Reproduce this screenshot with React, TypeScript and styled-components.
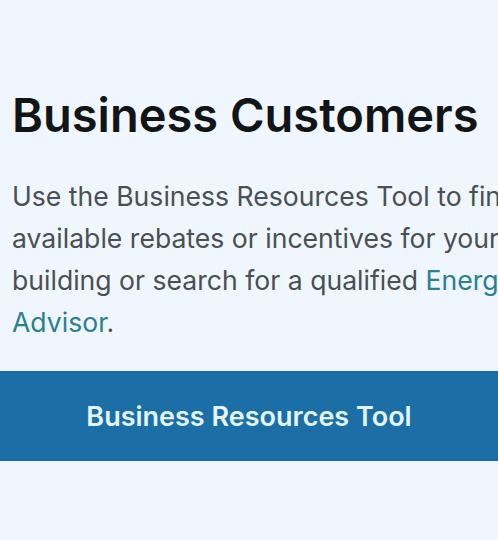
import React from "react";
import styled, { createGlobalStyle } from "styled-components";

const Global = createGlobalStyle`
  html, body {
    margin: 0;
    padding: 0;
    background: #eff6fe;
    overflow: hidden;
  }
  body {
    font-family: Inter, "Noto Sans", "Liberation Sans", sans-serif;
  }
`;

const Section = styled.section`
  width: 498px;
  height: 540px;
  padding-top: 87px;
  box-sizing: border-box;
  display: flex;
  flex-direction: column;
  overflow: hidden;
`;

const Body = styled.div`
  padding: 0 0 0 12px;
  width: 552px;
  box-sizing: border-box;
`;

const Title = styled.h2`
  margin: 0 0 32px;
  font-size: 47px;
  line-height: 56px;
  font-weight: 600;
  color: #121416;
  white-space: nowrap;
`;

const Lead = styled.p`
  margin: 0 0 28px;
  font-size: 26.6px;
  line-height: 42px;
  font-weight: 400;
  color: #4a4f54;
`;

const Link = styled.a`
  color: #2b7f8f;
  text-decoration: none;
`;

const ToolButton = styled.a`
  display: flex;
  align-items: center;
  justify-content: center;
  height: 90px;
  background: #1b6ea6;
  color: #e2f6fa;
  font-size: 27px;
  font-weight: 600;
  text-decoration: none;
`;

export default function App() {
  return (
    <>
      <Global />
      <Section>
        <Body>
          <Title>Business Customers</Title>
          <Lead>
            Use the Business Resources Tool to find available rebates or
            incentives for your building or search for a qualified{" "}
            <Link href="#">Energy Advisor</Link>.
          </Lead>
        </Body>
        <ToolButton href="#">Business Resources Tool</ToolButton>
      </Section>
    </>
  );
}
